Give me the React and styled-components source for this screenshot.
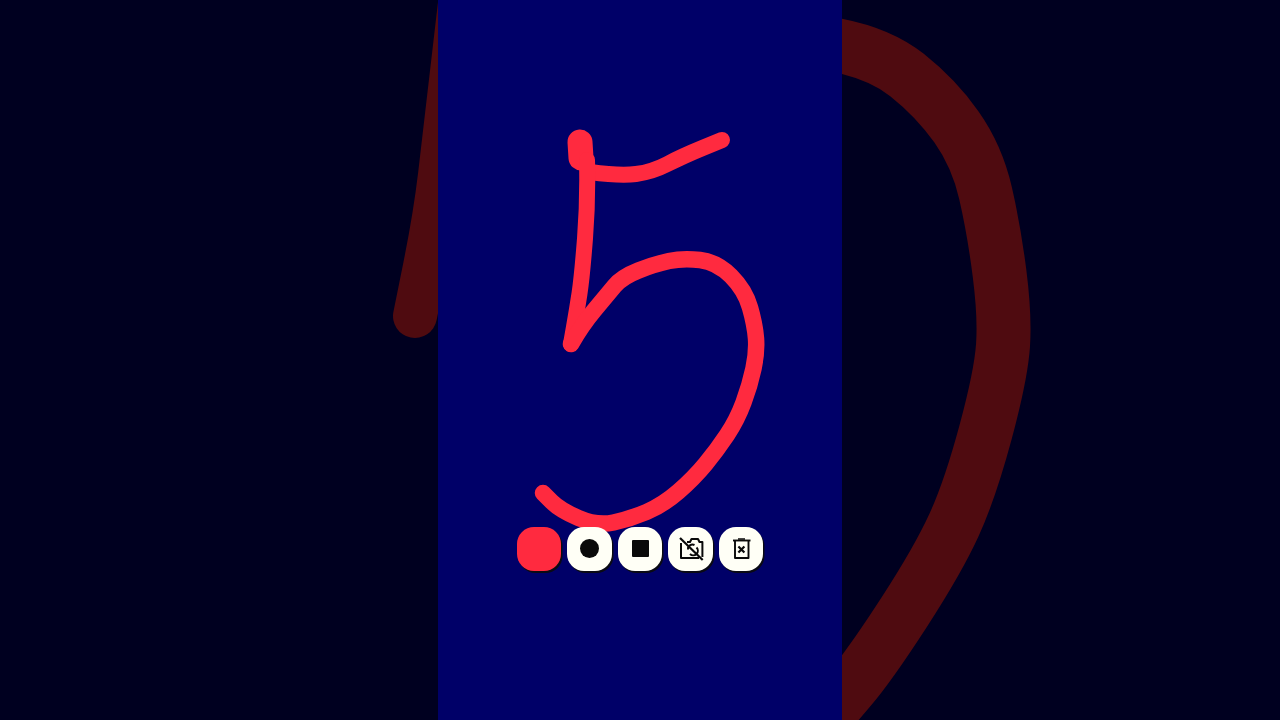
import React from "react";
import styled, { createGlobalStyle } from "styled-components";

const GlobalStyle = createGlobalStyle`
  html, body {
    margin: 0;
    height: 100%;
    background: #000020;
    overflow: hidden;
  }
`;

const Stage = styled.div`
  display: grid;
  grid-template-columns: 438px 404px 438px;
  width: 1280px;
  height: 720px;
  background: #000020;
`;

const SidePanel = styled.div`
  height: 720px;
  overflow: hidden;
  svg {
    display: block;
  }
`;

const CanvasColumn = styled.main`
  position: relative;
  display: flex;
  flex-direction: column;
  justify-content: flex-end;
  align-items: center;
  height: 720px;
  box-sizing: border-box;
  padding-bottom: 149px;
  background: #000068;
`;

const DrawingLayer = styled.svg`
  position: absolute;
  top: 0;
  left: 0;
`;

const Toolbar = styled.div`
  position: relative;
  display: flex;
  gap: 6px;
`;

const ToolButton = styled.button`
  display: flex;
  align-items: center;
  justify-content: center;
  width: 44.5px;
  height: 44.5px;
  padding: 0;
  border: none;
  border-radius: 17px;
  background: ${(p) => (p.$red ? "#ff2a3f" : "#fffff6")};
  box-shadow: 1.5px 2px 0 #0a0a14;
`;

const RecordDot = styled.span`
  width: 19px;
  height: 19px;
  border-radius: 50%;
  background: #0a0a0a;
`;

const StopSquare = styled.span`
  width: 17px;
  height: 17px;
  border-radius: 1px;
  background: #0a0a0a;
`;

// freehand strokes, smoothed through the midpoints
function smooth(points) {
  let d = `M${points[0][0]} ${points[0][1]}`;
  for (let i = 1; i < points.length - 1; i++) {
    const [x, y] = points[i];
    const mx = (x + points[i + 1][0]) / 2;
    const my = (y + points[i + 1][1]) / 2;
    d += ` Q${x} ${y} ${mx} ${my}`;
  }
  const last = points[points.length - 1];
  return `${d} L${last[0]} ${last[1]}`;
}

const fiveBlob = [[580, 142], [581, 158]];
const fiveTop = [
  [590, 172], [620, 176], [652, 172], [683, 156], [722, 140],
];
const fiveStem = [[587, 160], [588, 200], [582, 277], [577, 310], [571, 344]];
const fiveBowl = [
  [571, 344], [582, 325], [607, 295], [622, 277], [655, 264], [683, 258],
  [717, 262], [745, 290], [755, 325], [757, 352], [750, 385], [737, 420],
  [717, 450], [694, 478], [663, 505], [630, 519], [597, 526], [560, 510],
  [543, 493],
];

const ghostLeft = [[462, -14], [445, 133], [435, 217], [415, 316]];
const ghostRight = [
  [830, 44], [878, 52], [936, 98], [977, 156], [994, 230], [1005, 316],
  [1001, 375], [970, 490], [938, 560], [870, 665], [830, 712],
];

function CameraOffIcon() {
  return (
    <svg width="26" height="26" viewBox="0 0 26 26" fill="none" stroke="#0a0a0a" strokeWidth="2">
      <path d="M9 6 H12 L13.5 3 H20 L21.5 6 H24.4 V21" strokeLinejoin="round" />
      <path d="M21 22 H3 V7" strokeLinejoin="round" />
      <path d="M10 13.5 a4.5 4.5 0 0 1 6.5 -4.5" />
      <path d="M18.5 11.5 a4.5 4.5 0 0 1 -6.5 6.5" />
      <path d="M2 2 L24.7 24" strokeWidth="2.2" />
    </svg>
  );
}

function TrashIcon() {
  return (
    <svg width="22" height="24" viewBox="0 0 22 24" fill="none" stroke="#0a0a0a" strokeWidth="1.9">
      <path d="M3 3.5 H20.5" />
      <path d="M8 2 H15" strokeWidth="1.5" />
      <path d="M5 3.5 V21 H18.5 V3.5" strokeLinejoin="round" />
      <path d="M8.4 9.5 L14.4 15.5 M14.4 9.5 L8.4 15.5" strokeWidth="2.2" />
    </svg>
  );
}

export default function App() {
  return (
    <Stage>
      <GlobalStyle />
      <SidePanel>
        <svg width="438" height="720" viewBox="0 0 438 720">
          <path d={smooth(ghostLeft)} fill="none" stroke="#4f0b10" strokeWidth="44" strokeLinecap="round" strokeLinejoin="round" />
        </svg>
      </SidePanel>
      <CanvasColumn>
        <DrawingLayer width="404" height="720" viewBox="438 0 404 720">
          <g fill="none" stroke="#ff2a3f" strokeLinecap="round" strokeLinejoin="round">
            <path d={smooth(fiveBlob)} strokeWidth="25" />
            <path d={smooth(fiveTop)} strokeWidth="16" />
            <path d={smooth(fiveStem)} strokeWidth="16" />
            <path d={smooth(fiveBowl)} strokeWidth="16.5" />
          </g>
        </DrawingLayer>
        <Toolbar>
          <ToolButton $red aria-label="Colour" />
          <ToolButton aria-label="Record"><RecordDot /></ToolButton>
          <ToolButton aria-label="Stop"><StopSquare /></ToolButton>
          <ToolButton aria-label="Camera off"><CameraOffIcon /></ToolButton>
          <ToolButton aria-label="Delete"><TrashIcon /></ToolButton>
        </Toolbar>
      </CanvasColumn>
      <SidePanel>
        <svg width="438" height="720" viewBox="842 0 438 720">
          <path d={smooth(ghostRight)} fill="none" stroke="#4f0b10" strokeWidth="54" strokeLinecap="butt" strokeLinejoin="round" />
        </svg>
      </SidePanel>
    </Stage>
  );
}
